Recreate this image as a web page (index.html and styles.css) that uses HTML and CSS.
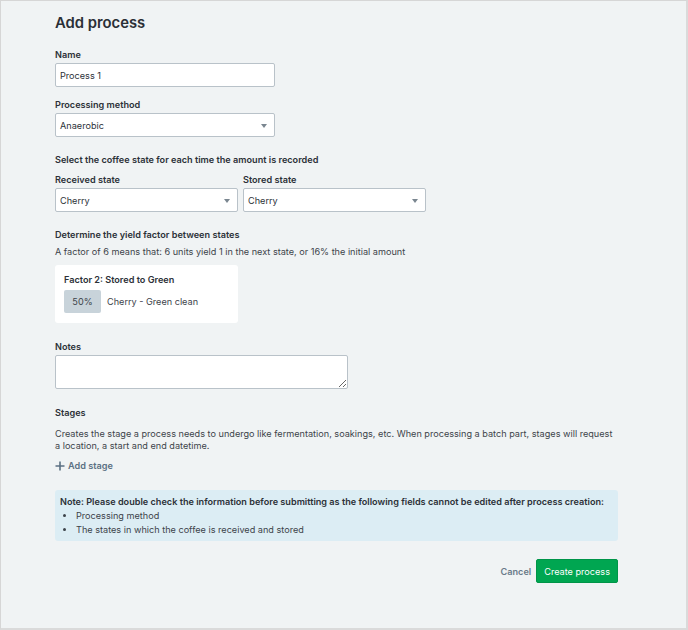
FILE: index.html
```html
<!DOCTYPE html>
<html lang="en">
<head>
<meta charset="utf-8">
<title>Add process</title>
<link rel="stylesheet" href="styles.css">
</head>
<body>
<div class="frame">
  <div class="content">
    <h1 class="title">Add process</h1>

    <div class="field field-name">
      <label class="label">Name</label>
      <input class="input w-220" type="text" value="Process 1">
    </div>

    <div class="field field-method">
      <label class="label">Processing method</label>
      <div class="select w-220"><span>Anaerobic</span><i class="caret"></i></div>
    </div>

    <div class="section-title sec-states">Select the coffee state for each time the amount is recorded</div>
    <div class="states">
      <div class="field">
        <label class="label">Received state</label>
        <div class="select w-183"><span>Cherry</span><i class="caret"></i></div>
      </div>
      <div class="field">
        <label class="label">Stored state</label>
        <div class="select w-183"><span>Cherry</span><i class="caret"></i></div>
      </div>
    </div>

    <div class="section-title sec-yield">Determine the yield factor between states</div>
    <p class="help">A factor of 6 means that: 6 units yield 1 in the next state, or 16% the initial amount</p>

    <div class="card">
      <div class="card-title">Factor 2: Stored to Green</div>
      <div class="factor-row">
        <span class="pill">50%</span>
        <span class="factor-text">Cherry - Green clean</span>
      </div>
    </div>

    <div class="field field-notes">
      <label class="label">Notes</label>
      <textarea class="textarea"></textarea>
    </div>

    <div class="section-title sec-stages">Stages</div>
    <p class="desc">Creates the stage a process needs to undergo like fermentation, soakings, etc. When processing a batch part, stages will request a location, a start and end datetime.</p>
    <div class="add-stage">
      <svg width="10" height="10" viewBox="0 0 10 10"><path d="M5 0.5v9M0.5 5h9" stroke="#5b7083" stroke-width="1.6" fill="none"/></svg>
      <span>Add stage</span>
    </div>

    <div class="note">
      <div class="note-title">Note: Please double check the information before submitting as the following fields cannot be edited after process creation:</div>
      <ul class="note-list">
        <li>Processing method</li>
        <li>The states in which the coffee is received and stored</li>
      </ul>
    </div>

    <div class="actions">
      <span class="cancel">Cancel</span>
      <button class="primary" type="button">Create process</button>
    </div>
  </div>
</div>
</body>
</html>
```

FILE: styles.css
```css
* { box-sizing: border-box; }
html, body { margin: 0; padding: 0; }
body {
  font-family: Inter, "Noto Sans", sans-serif;
  color: #2c3138;
  font-size: 9.15px;
  background: #dcdcdc;
}
.frame {
  width: 688px;
  height: 630px;
  border-top: 1px solid #d6d6d6;
  border-left: 1px solid #d6d6d6;
  border-right: 2px solid #dadada;
  border-bottom: 2px solid #dadada;
  background: #f0f3f4;
}
.content {
  width: 618px;
  padding-left: 54px;
  display: flex;
  flex-direction: column;
  align-items: flex-start;
}
.title {
  margin: 12px 0 0;
  font-size: 14.8px;
  line-height: 20px;
  font-weight: 600;
  color: #2a2f36;
}
.field { display: flex; flex-direction: column; }
.label {
  font-size: 9.15px;
  line-height: 14px;
  font-weight: 600;
  margin-bottom: 1px;
}
.field-name { margin-top: 15px; }
.field-method { margin-top: 11px; }
.input, .select {
  height: 24px;
  border: 1px solid #b9c2c9;
  border-radius: 2px;
  background: #fff;
  font-family: inherit;
  font-size: 9.15px;
  color: #2c3138;
  padding: 0 4px;
  outline: none;
}
.w-220 { width: 220px; }
.w-183 { width: 183px; }
.select {
  display: flex;
  align-items: center;
  justify-content: space-between;
  padding-right: 7px;
}
.caret {
  width: 0; height: 0;
  border-left: 3.5px solid transparent;
  border-right: 3.5px solid transparent;
  border-top: 4px solid #7a8690;
  margin-top: 1px;
}
.section-title {
  font-size: 9.15px;
  line-height: 14px;
  font-weight: 600;
}
.sec-states { margin-top: 16px; }
.states { display: flex; gap: 5px; margin-top: 6px; }
.sec-yield { margin-top: 16px; }
.help {
  margin: 3px 0 0;
  line-height: 14px;
  color: #3d434a;
}
.card {
  margin-top: 6px;
  width: 183px;
  background: #fff;
  border-radius: 3px;
  padding: 8px 8px 10px 9px;
}
.card-title { line-height: 14px; font-weight: 600; }
.factor-row { display: flex; align-items: center; gap: 6px; margin-top: 3px; }
.pill {
  width: 37px;
  height: 23px;
  background: #c8d3da;
  border-radius: 2px;
  display: flex;
  align-items: center;
  justify-content: center;
  color: #3d434a;
}
.factor-text { color: #3d434a; }
.field-notes { margin-top: 17px; }
.textarea {
  width: 293px;
  height: 34px;
  border: 1px solid #b9c2c9;
  border-radius: 2px;
  background: #fff;
  resize: both;
  outline: none;
  margin: 0;
  display: block;
}
.sec-stages { margin-top: 17px; }
.desc {
  margin: 8px 0 0;
  line-height: 11.5px;
  color: #3d434a;
  width: 562px;
}
.add-stage {
  margin-top: 8px;
  display: flex;
  align-items: center;
  gap: 3px;
  color: #5b7083;
  font-weight: 600;
  line-height: 14px;
}
.note {
  margin-top: 17px;
  width: 563px;
  background: #dcedf4;
  border-radius: 3px;
  padding: 5px 5px 4px;
}
.note-title { font-weight: 600; line-height: 14px; }
.note-list {
  margin: 0;
  padding-left: 16px;
  color: #3d434a;
  line-height: 14px;
}
.actions {
  margin-top: 18px;
  width: 563px;
  display: flex;
  justify-content: flex-end;
  align-items: center;
  gap: 5px;
}
.cancel { color: #6a7b89; font-weight: 600; }
.primary {
  height: 24px;
  padding: 0 7px;
  background: #00a651;
  color: #fff;
  border: 1px solid #009548;
  border-radius: 2px;
  font-family: inherit;
  font-size: 9.15px;
}
```
